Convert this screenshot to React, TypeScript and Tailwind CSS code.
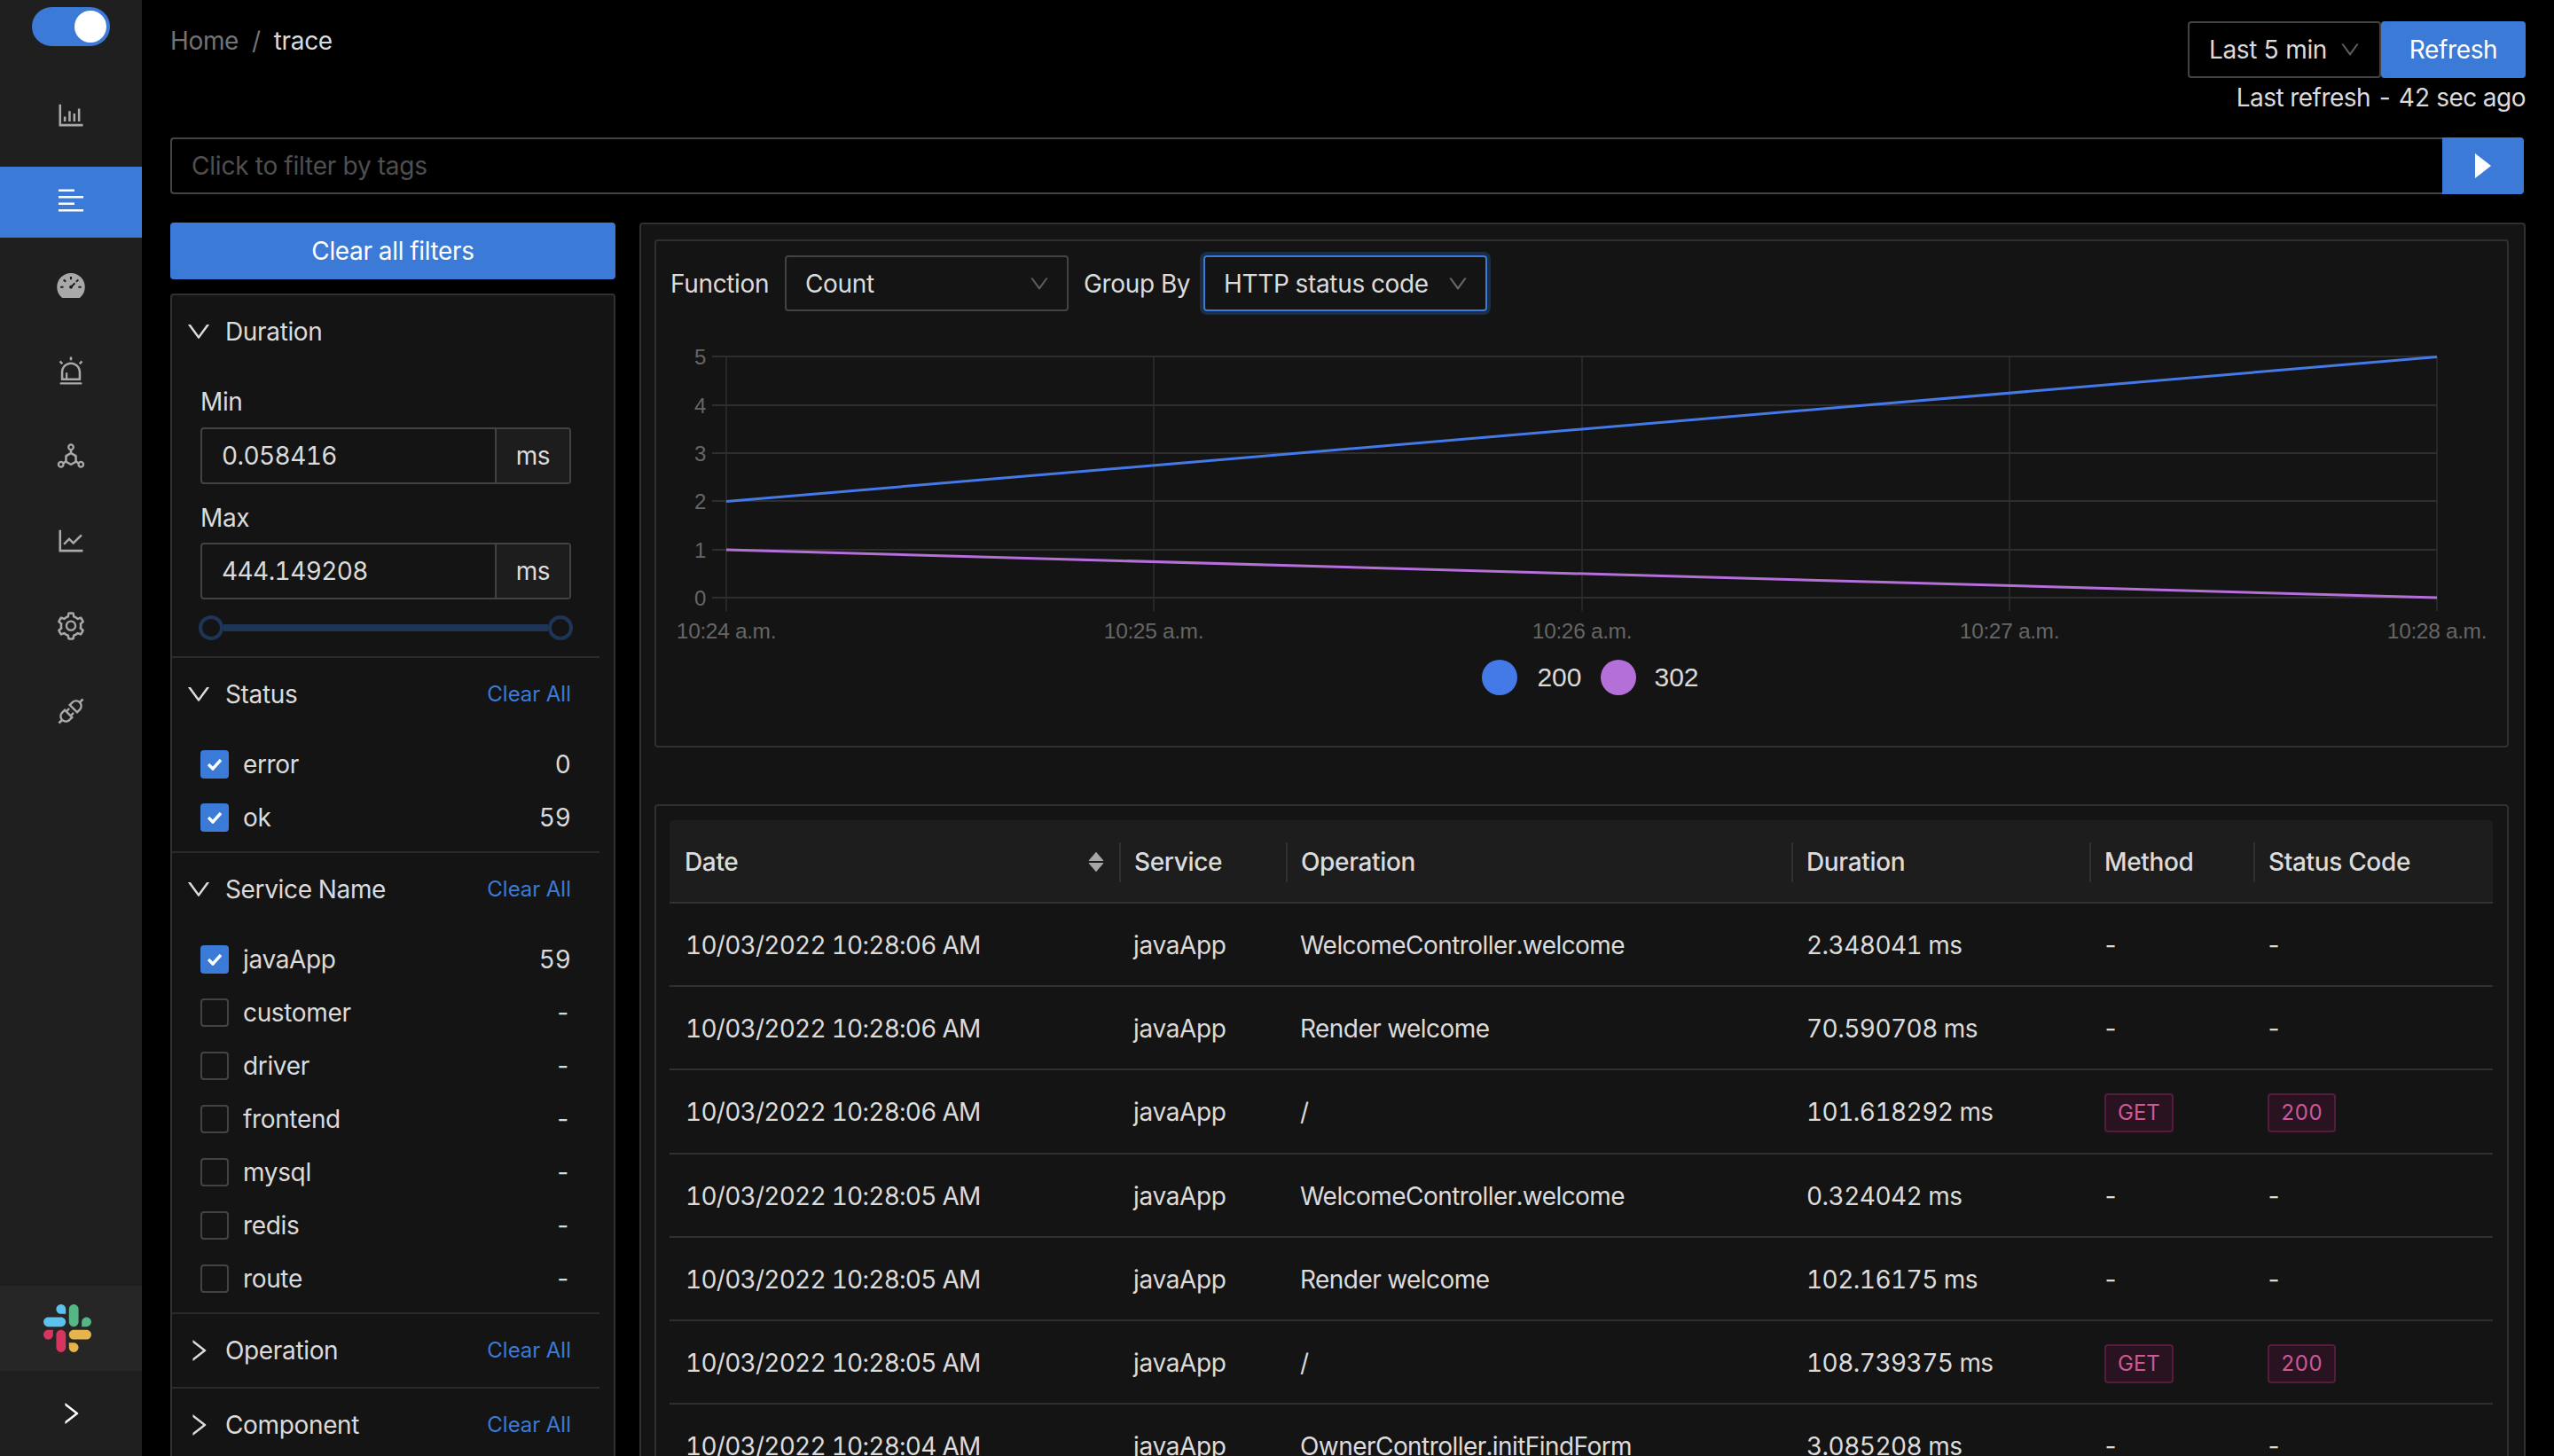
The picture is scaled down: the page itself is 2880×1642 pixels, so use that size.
import React from "react";
import {
  AiOutlineBarChart,
  AiOutlineAlignLeft,
  AiFillDashboard,
  AiOutlineAlert,
  AiOutlineDeploymentUnit,
  AiOutlineLineChart,
  AiOutlineSetting,
  AiOutlineApi,
  AiOutlineDown,
  AiOutlineRight,
  AiFillCaretUp,
  AiFillCaretDown,
} from "react-icons/ai";

const navIcons = [
  AiOutlineBarChart,
  AiOutlineAlignLeft,
  AiFillDashboard,
  AiOutlineAlert,
  AiOutlineDeploymentUnit,
  AiOutlineLineChart,
  AiOutlineSetting,
  AiOutlineApi,
];

function SlackLogo() {
  return (
    <svg viewBox="0 0 2447.6 2452.5" className="h-[54px] w-[54px]">
      <path
        d="m897.4 0c-135.3.1-244.8 109.9-244.7 245.2-.1 135.3 109.5 245.1 244.8 245.2h244.8v-245.1c.1-135.3-109.5-245.1-244.9-245.3.1 0 .1 0 0 0m0 654h-652.6c-135.3.1-244.9 109.9-244.8 245.2-.2 135.3 109.4 245.1 244.7 245.3h652.7c135.3-.1 244.9-109.9 244.8-245.2.1-135.4-109.5-245.2-244.8-245.3z"
        fill="#5cc1ec"
      />
      <path
        d="m2447.6 899.2c.1-135.3-109.5-245.1-244.8-245.2-135.3.1-244.9 109.9-244.8 245.2v245.3h244.8c135.3-.1 244.9-109.9 244.8-245.3zm-652.7 0v-654c.1-135.2-109.4-245-244.7-245.2-135.3.1-244.9 109.9-244.8 245.2v654c-.2 135.3 109.4 245.1 244.7 245.3 135.3-.1 244.9-109.9 244.8-245.3z"
        fill="#56b686"
      />
      <path
        d="m1550.1 2452.5c135.3-.1 244.9-109.9 244.8-245.2.1-135.3-109.5-245.1-244.8-245.2h-244.8v245.2c-.1 135.2 109.5 245 244.8 245.2zm0-654.1h652.7c135.3-.1 244.9-109.9 244.8-245.2.2-135.3-109.4-245.1-244.7-245.3h-652.7c-135.3.1-244.9 109.9-244.8 245.2-.1 135.4 109.4 245.2 244.7 245.3z"
        fill="#e5b44c"
      />
      <path
        d="m0 1553.2c-.1 135.3 109.5 245.1 244.8 245.2 135.3-.1 244.9-109.9 244.8-245.2v-245.2h-244.8c-135.3.1-244.9 109.9-244.8 245.2zm652.7 0v654c-.2 135.3 109.4 245.1 244.7 245.3 135.3-.1 244.9-109.9 244.8-245.2v-653.9c.2-135.3-109.4-245.1-244.7-245.3-135.4 0-244.8 109.8-244.8 245.1 0 0 0 .1 0 0z"
        fill="#d5355f"
      />
    </svg>
  );
}

function Sidebar() {
  return (
    <aside className="flex h-full w-[160px] shrink-0 flex-col bg-[#1f1f1f]">
      <div className="mx-auto mt-[8px] flex h-[44px] w-[88px] items-center justify-end rounded-full bg-[#3b7ad6] pr-[4px]">
        <div className="h-[36px] w-[36px] rounded-full bg-white" />
      </div>
      <nav className="mt-[40px] flex flex-col gap-[16px]">
        {navIcons.map((Icon, i) => (
          <div
            key={i}
            className={
              i === 1
                ? "flex h-[80px] items-center justify-center bg-[#3b7ad6] pb-[4px] text-white"
                : "flex h-[80px] items-center justify-center pb-[4px] text-[#a9a9a9]"
            }
          >
            <Icon size={36} />
          </div>
        ))}
      </nav>
      <div className="mt-auto flex h-[96px] items-center bg-[#262626] pl-[49px]">
        <SlackLogo />
      </div>
      <div className="flex h-[96px] items-center justify-center text-white">
        <AiOutlineRight size={32} />
      </div>
    </aside>
  );
}

function Checkbox({ checked }: { checked: boolean }) {
  if (checked) {
    return (
      <div className="flex h-[32px] w-[32px] items-center justify-center rounded-[4px] bg-[#3b7ad6]">
        <svg viewBox="0 0 18 14" className="h-[14px] w-[18px]" fill="none">
          <path d="M2 7 L7 12 L16 2" stroke="#fff" strokeWidth="3.4" />
        </svg>
      </div>
    );
  }
  return <div className="h-[32px] w-[32px] rounded-[4px] border-2 border-[#434343]" />;
}

function FilterRow({ label, count, checked }: { label: string; count: string; checked?: boolean }) {
  return (
    <div className="flex h-[60px] items-center">
      <Checkbox checked={!!checked} />
      <span className="ml-[16px] flex-1">{label}</span>
      <span className="tracking-normal">{count}</span>
    </div>
  );
}

function SectionHeader({ title, open, clear }: { title: string; open?: boolean; clear?: boolean }) {
  return (
    <div className="flex h-[82px] items-center pr-[48px] pl-[14px]">
      <span className="flex w-[46px] items-center">
        {open ? <AiOutlineDown size={32} /> : <AiOutlineRight size={32} />}
      </span>
      <span className="flex-1">{title}</span>
      {clear && <span className="text-[24px] tracking-normal text-[#3b7ad6]">Clear All</span>}
    </div>
  );
}

const Divider = () => <div className="mt-[8px] mr-[16px] h-[2px] bg-[#2b2b2b]" />;

function RangeInput({ value }: { value: string }) {
  return (
    <div className="flex h-[64px] rounded-[4px] border-2 border-[#434343]">
      <div className="flex flex-1 items-center pl-[22px] tracking-[-0.6px]">{value}</div>
      <div className="flex w-[84px] items-center justify-center border-l-2 border-[#434343] bg-[#1d1d1d]">ms</div>
    </div>
  );
}

function FilterPanel() {
  return (
    <div className="mt-[16px] flex-1 rounded-[4px] border-2 border-[#303030] bg-[#141414]">
      <SectionHeader title="Duration" open />
      <div className="pr-[48px] pl-[32px]">
        <div className="mt-[16px] h-[44px] leading-[44px]">Min</div>
        <div className="mt-[7px]">
          <RangeInput value="0.058416" />
        </div>
        <div className="mt-[16px] h-[44px] leading-[44px]">Max</div>
        <div className="mt-[6px]">
          <RangeInput value="444.149208" />
        </div>
        <div className="-mx-[2px] mt-[18px] flex h-[28px] items-center">
          <div className="h-[28px] w-[28px] rounded-full border-4 border-[#1d3557]" />
          <div className="h-[8px] flex-1 bg-[#1d3557]" />
          <div className="h-[28px] w-[28px] rounded-full border-4 border-[#1d3557]" />
        </div>
      </div>
      <div className="mt-[18px] mr-[16px] h-[2px] bg-[#2b2b2b]" />

      <SectionHeader title="Status" open clear />
      <div className="mt-[8px] pr-[48px] pl-[32px]">
        <FilterRow label="error" count="0" checked />
        <FilterRow label="ok" count="59" checked />
      </div>
      <Divider />

      <SectionHeader title="Service Name" open clear />
      <div className="mt-[8px] pr-[48px] pl-[32px]">
        <FilterRow label="javaApp" count="59" checked />
        <FilterRow label="customer" count="-" />
        <FilterRow label="driver" count="-" />
        <FilterRow label="frontend" count="-" />
        <FilterRow label="mysql" count="-" />
        <FilterRow label="redis" count="-" />
        <FilterRow label="route" count="-" />
      </div>
      <Divider />

      <SectionHeader title="Operation" clear />
      <div className="mr-[16px] h-[2px] bg-[#2b2b2b]" />
      <SectionHeader title="Component" clear />
    </div>
  );
}

function Chart() {
  const xs = [79, 561, 1044, 1526, 2008];
  const ys = [23, 78, 132, 186, 241, 295];
  const labels = ["10:24 a.m.", "10:25 a.m.", "10:26 a.m.", "10:27 a.m.", "10:28 a.m."];
  return (
    <svg viewBox="0 0 2087 350" className="mt-[28px] block h-[350px] w-[2087px]">
      {ys.map((y) => (
        <line key={y} x1={63} x2={2008} y1={y} y2={y} stroke="#2e2e2e" strokeWidth={2} />
      ))}
      {xs.map((x) => (
        <line key={x} x1={x} x2={x} y1={23} y2={310} stroke="#2e2e2e" strokeWidth={1.5} />
      ))}
      {ys.map((y, i) => (
        <text key={y} x={56} y={y + 9} textAnchor="end" fill="#666" fontSize={24} fontFamily="Liberation Sans, sans-serif">
          {5 - i}
        </text>
      ))}
      {xs.map((x, i) => (
        <text key={x} x={x} y={341} textAnchor="middle" fill="#666" fontSize={24.5} fontFamily="Liberation Sans, sans-serif">
          {labels[i]}
        </text>
      ))}
      <line x1={79} y1={186.5} x2={2008} y2={23.5} stroke="#4479e8" strokeWidth={3} />
      <line x1={79} y1={241} x2={2008} y2={295} stroke="#b46fd9" strokeWidth={3} />
    </svg>
  );
}

function Select({ label, className, chevron }: { label: string; className: string; chevron?: string }) {
  return (
    <div className={className}>
      <span>{label}</span>
      <AiOutlineDown size={26} className={chevron ?? "text-[#5c5c5c]"} />
    </div>
  );
}

const rows = [
  ["10/03/2022 10:28:06 AM", "WelcomeController.welcome", "2.348041 ms", false],
  ["10/03/2022 10:28:06 AM", "Render welcome", "70.590708 ms", false],
  ["10/03/2022 10:28:06 AM", "/", "101.618292 ms", true],
  ["10/03/2022 10:28:05 AM", "WelcomeController.welcome", "0.324042 ms", false],
  ["10/03/2022 10:28:05 AM", "Render welcome", "102.16175 ms", false],
  ["10/03/2022 10:28:05 AM", "/", "108.739375 ms", true],
  ["10/03/2022 10:28:04 AM", "OwnerController.initFindForm", "3.085208 ms", false],
] as const;

function Tag({ children }: { children: React.ReactNode }) {
  return (
    <span className="inline-flex h-[44px] items-center rounded-[4px] border-2 border-[#551c3b] bg-[#291321] px-[13px] text-[24px] tracking-normal text-[#cb5a96]">
      {children}
    </span>
  );
}

const Dash = () => <span className="-ml-[2px]">-</span>;

function HeadCell({ children, first }: { children: React.ReactNode; first?: boolean }) {
  return (
    <th className="border-b-2 border-[#303030] bg-[#1d1d1d] p-0 pt-[2px] text-left font-medium first:rounded-tl-[4px] last:rounded-tr-[4px]">
      <div className={first ? "flex h-[45px] items-center pr-[16px] pl-[17px]" : "flex h-[45px] items-center border-l-2 border-[#303030] pl-[15px]"}>
        {children}
      </div>
    </th>
  );
}

const cell = "border-b-2 border-[#303030] pt-[2px]";

function TraceTable() {
  return (
    <table className="w-[2056px] table-fixed border-separate border-spacing-0">
      <colgroup>
        <col className="w-[507px]" />
        <col className="w-[188px]" />
        <col className="w-[570px]" />
        <col className="w-[336px]" />
        <col className="w-[185px]" />
        <col className="w-[270px]" />
      </colgroup>
      <thead>
        <tr className="h-[94px]">
          <HeadCell first>
            <span className="flex-1">Date</span>
            <span className="-mr-[2px] flex flex-col text-[#a6a6a6]">
              <AiFillCaretUp size={24} className="-mb-[6px]" />
              <AiFillCaretDown size={24} className="-mt-[6px]" />
            </span>
          </HeadCell>
          <HeadCell>Service</HeadCell>
          <HeadCell>Operation</HeadCell>
          <HeadCell>Duration</HeadCell>
          <HeadCell>Method</HeadCell>
          <HeadCell>Status Code</HeadCell>
        </tr>
      </thead>
      <tbody>
        {rows.map((r, i) => (
          <tr key={i} className="h-[94.2px]">
            <td className={`${cell} pl-[18px] tracking-[-0.75px]`}>{r[0]}</td>
            <td className={`${cell} pl-[16px]`}>javaApp</td>
            <td className={`${cell} pl-[16px] tracking-[-0.55px]`}>{r[1]}</td>
            <td className={`${cell} pl-[17px] tracking-[-0.55px]`}>{r[2]}</td>
            <td className={`${cell} pl-[17px]`}>{r[3] ? <Tag>GET</Tag> : <Dash />}</td>
            <td className={`${cell} pl-[16px]`}>{r[3] ? <Tag>200</Tag> : <Dash />}</td>
          </tr>
        ))}
      </tbody>
    </table>
  );
}

export default function App() {
  return (
    <div className="flex h-[1642px] w-[2880px] overflow-hidden bg-black text-[28px] leading-[44px] tracking-[-0.35px] text-[#dbdbdb] tabular-nums [font-family:Inter,sans-serif]">
      <Sidebar />
      <main className="flex h-full min-w-0 flex-1 flex-col pr-[32px] pl-[32px]">
        <header className="flex h-[155px] shrink-0 items-start justify-between pt-[24px]">
          <div className="flex h-[44px] items-center">
            <span className="text-[#737373]">Home</span>
            <span className="mx-[15px] text-[#737373]">/</span>
            <span>trace</span>
          </div>
          <div className="flex flex-col items-end">
            <div className="flex h-[64px]">
              <Select
                label="Last 5 min"
                className="flex w-[218px] items-center justify-between rounded-[4px] border-2 border-[#434343] pr-[20px] pl-[22px]"
              />
              <div className="flex w-[163px] items-center justify-center rounded-[4px] bg-[#3b7ad6] text-white">Refresh</div>
            </div>
            <div className="h-[44px] tracking-[-0.5px]">Last refresh - 42 sec ago</div>
          </div>
        </header>

        <div className="mr-[2px] flex h-[64px] shrink-0">
          <div className="flex flex-1 items-center rounded-l-[4px] border-2 border-r-0 border-[#434343] pl-[22px] tracking-[-0.2px] text-[#4f4f4f]">
            Click to filter by tags
          </div>
          <div className="flex w-[92px] items-center justify-center rounded-r-[4px] bg-[#3b7ad6]">
            <svg viewBox="0 0 18 28" className="h-[28px] w-[18px]">
              <path d="M0 0 L18 14 L0 28 Z" fill="#fff" />
            </svg>
          </div>
        </div>

        <div className="mt-[32px] flex min-h-0 flex-1 gap-[27px]">
          <div className="flex w-[502px] shrink-0 flex-col">
            <div className="flex h-[64px] shrink-0 items-center justify-center rounded-[4px] bg-[#3b7ad6] text-white">
              Clear all filters
            </div>
            <FilterPanel />
          </div>

          <div className="min-w-0 flex-1 rounded-t-[4px] border-x-2 border-t-2 border-[#303030] bg-[#141414] pt-[17px] pr-[17px] pl-[15px]">
            <div className="h-[573px] rounded-[4px] border-2 border-[#303030]">
              <div className="flex items-center pt-[16px] pl-[16px]">
                <span className="w-[129px]">Function</span>
                <Select
                  label="Count"
                  className="flex h-[63px] w-[320px] items-center justify-between rounded-[4px] border-2 border-[#434343] pr-[18px] pl-[21px]"
                />
                <span className="ml-[17px] w-[135px]">Group By</span>
                <Select
                  label="HTTP status code"
                  chevron="text-[#6a6a6a]"
                  className="flex h-[63px] w-[320px] items-center justify-between rounded-[4px] border-2 border-[#3b7ad6] pr-[18px] pl-[21px] shadow-[0_0_0_4px_#1c2d46]"
                />
              </div>
              <Chart />
              <div className="mt-[15px] flex h-[40px] items-center justify-center pl-[20px] text-[30px] tracking-normal [font-family:'Liberation_Sans',sans-serif]">
                <span className="h-[40px] w-[40px] rounded-full bg-[#4479e8]" />
                <span className="ml-[22px]">200</span>
                <span className="ml-[21px] h-[40px] w-[40px] rounded-full bg-[#b46fd9]" />
                <span className="ml-[21px]">302</span>
              </div>
            </div>
            <div className="mt-[64px] rounded-t-[4px] border-x-2 border-t-2 border-[#303030] px-[15px] pt-[16px]">
              <TraceTable />
            </div>
          </div>
        </div>
      </main>
    </div>
  );
}
